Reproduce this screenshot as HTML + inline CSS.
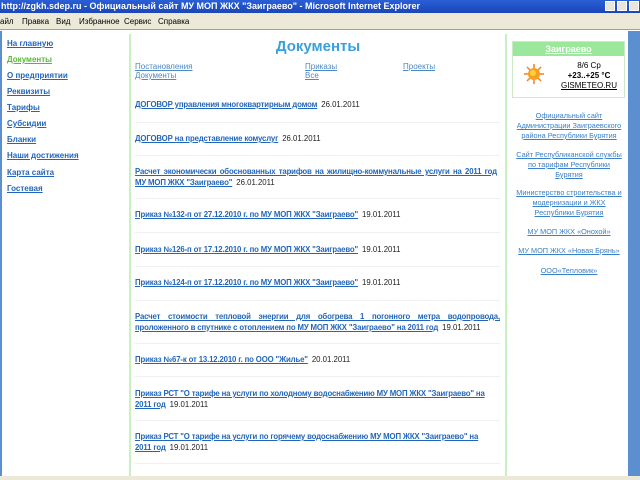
<!DOCTYPE html>
<html><head><meta charset="utf-8"><style>
*{margin:0;padding:0;box-sizing:border-box}
body{width:640px;height:480px;overflow:hidden;background:#fff;font-family:"Liberation Sans",sans-serif;position:relative}
.title{position:absolute;left:0;top:0;width:640px;height:13px;background:linear-gradient(#2a5fd6,#1a46b8);color:#fff;font-size:9px;font-weight:bold;line-height:13px;padding-left:1px;white-space:nowrap}
.tb{position:absolute;top:1px;width:10px;height:10px;background:#e8e6dc;border:1px solid #fff}
.menu{position:absolute;left:0;top:13px;width:640px;height:17px;background:#ece9d8;font-size:8px;line-height:17px;border-bottom:1px solid #a0a0a0}
.menu span{position:absolute}
.lb{position:absolute;left:0;top:31px;width:2px;height:445px;background:#5b8fd0}
.sb{position:absolute;left:628px;top:31px;width:12px;height:445px;background:#5b8fd0}
.bot{position:absolute;left:0;top:476px;width:640px;height:4px;background:#ece9d8}
a{color:#2266bb;text-decoration:underline}
.nav a{position:absolute;left:7px;font-size:8px;font-weight:bold;color:#2266bb}
.vl{position:absolute;top:34px;width:2px;height:442px;background:#c8f0c0}
h1{position:absolute;left:130px;width:376px;top:38px;text-align:center;font-size:15px;color:#3aa0dd;font-weight:bold}
.sub a{position:absolute;font-size:8px;color:#4a88c8}
.it{position:absolute;left:135px;width:365px;font-size:7.8px;line-height:10.5px;text-align:justify;letter-spacing:-0.15px}
.it a{font-weight:bold;color:#2266bb}
.it span{color:#222;margin-left:4px;letter-spacing:0}
.sep{position:absolute;left:135px;width:365px;height:1px;background:#eef2ee}
.w{position:absolute;left:512px;top:41px;width:113px;height:57px;border:1px solid #cde8c8}
.wh{height:14px;background:#9be79b;text-align:center;font-size:9px;line-height:14px;font-weight:bold}
.wh a{color:#fff}
.r{position:absolute;left:514px;width:110px;text-align:center;font-size:7.3px;line-height:10px}
.r a{color:#3a80c8}
</style></head><body>
<div class="title">http://zgkh.sdep.ru - Официальный сайт МУ МОП ЖКХ "Заиграево" - Microsoft Internet Explorer</div>
<div class="tb" style="left:605px"></div><div class="tb" style="left:617px"></div><div class="tb" style="left:629px"></div>
<div class="menu"><span style="left:0">айл</span><span style="left:22px">Правка</span><span style="left:56px">Вид</span><span style="left:79px">Избранное</span><span style="left:124px">Сервис</span><span style="left:158px">Справка</span></div>
<div class="lb"></div><div class="sb"></div><div class="bot"></div>
<div class="nav">
<a style="top:39px">На главную</a>
<a style="top:55px;color:#55bb33">Документы</a>
<a style="top:71px">О предприятии</a>
<a style="top:87px">Реквизиты</a>
<a style="top:103px">Тарифы</a>
<a style="top:119px">Субсидии</a>
<a style="top:135px">Бланки</a>
<a style="top:151px">Наши достижения</a>
<a style="top:168px">Карта сайта</a>
<a style="top:184px">Гостевая</a>
</div>
<div class="vl" style="left:129px"></div><div class="vl" style="left:505px"></div>
<h1>Документы</h1>
<div class="sub">
<a style="left:135px;top:62px">Постановления</a><a style="left:305px;top:62px">Приказы</a><a style="left:403px;top:62px">Проекты</a>
<a style="left:135px;top:71px">Документы</a><a style="left:305px;top:71px">Все</a>
</div>
<div class="it" style="top:100px"><a>ДОГОВОР управления многоквартирным домом</a><span>26.01.2011</span></div>
<div class="sep" style="top:122px"></div>
<div class="it" style="top:134px"><a>ДОГОВОР на представление комуслуг</a><span>26.01.2011</span></div>
<div class="sep" style="top:155px"></div>
<div class="it" style="top:167px;width:362px"><a>Расчет экономически обоснованных тарифов на жилищно-коммунальные услуги на 2011 год МУ МОП ЖКХ "Заиграево"</a><span>26.01.2011</span></div>
<div class="sep" style="top:198px"></div>
<div class="it" style="top:210px"><a>Приказ №132-п от 27.12.2010 г. по МУ МОП ЖКХ "Заиграево"</a><span>19.01.2011</span></div>
<div class="sep" style="top:232px"></div>
<div class="it" style="top:245px"><a>Приказ №126-п от 17.12.2010 г. по МУ МОП ЖКХ "Заиграево"</a><span>19.01.2011</span></div>
<div class="sep" style="top:266px"></div>
<div class="it" style="top:278px"><a>Приказ №124-п от 17.12.2010 г. по МУ МОП ЖКХ "Заиграево"</a><span>19.01.2011</span></div>
<div class="sep" style="top:300px"></div>
<div class="it" style="top:312px"><a>Расчет стоимости тепловой энергии для обогрева 1 погонного метра водопровода, проложенного в спутнике с отоплением по МУ МОП ЖКХ "Заиграево" на 2011 год</a><span>19.01.2011</span></div>
<div class="sep" style="top:343px"></div>
<div class="it" style="top:355px"><a>Приказ №67-к от 13.12.2010 г. по ООО "Жилье"</a><span>20.01.2011</span></div>
<div class="sep" style="top:376px"></div>
<div class="it" style="top:389px"><a>Приказ РСТ "О тарифе на услуги по холодному водоснабжению МУ МОП ЖКХ "Заиграево" на<br>2011 год</a><span>19.01.2011</span></div>
<div class="sep" style="top:420px"></div>
<div class="it" style="top:432px"><a>Приказ РСТ "О тарифе на услуги по горячему водоснабжению МУ МОП ЖКХ "Заиграево" на<br>2011 год</a><span>19.01.2011</span></div>
<div class="sep" style="top:463px"></div>
<div class="w"><div class="wh"><a>Заиграево</a></div>
<svg style="position:absolute;left:11px;top:22px" width="20" height="20" viewBox="0 0 20 20"><g stroke="#f08020" stroke-width="1.5"><line x1="10" y1="0" x2="10" y2="20"/><line x1="0" y1="10" x2="20" y2="10"/><line x1="3" y1="3" x2="17" y2="17"/><line x1="17" y1="3" x2="3" y2="17"/></g><circle cx="10" cy="10" r="6" fill="#f7a020"/><circle cx="9" cy="9" r="3" fill="#fcd040"/></svg>
<div style="position:absolute;left:40px;top:19px;width:72px;text-align:center;font-size:8px;line-height:10px">8/6 Ср<br><b>+23..+25 °C</b><br><span style="text-decoration:underline">GISMETEO.RU</span></div>
</div>
<div class="r" style="top:111px"><a>Официальный сайт Администрации Заиграевского района Республики Бурятия</a></div>
<div class="r" style="top:150px"><a>Сайт Республиканской службы по тарифам Республики Бурятия</a></div>
<div class="r" style="top:188px"><a>Министерство строительства и модернизации и ЖКХ Республики Бурятия</a></div>
<div class="r" style="top:227px"><a>МУ МОП ЖКХ «Онохой»</a></div>
<div class="r" style="top:246px"><a>МУ МОП ЖКХ «Новая Брянь»</a></div>
<div class="r" style="top:266px"><a>ООО«Тепловик»</a></div>
</body></html>
